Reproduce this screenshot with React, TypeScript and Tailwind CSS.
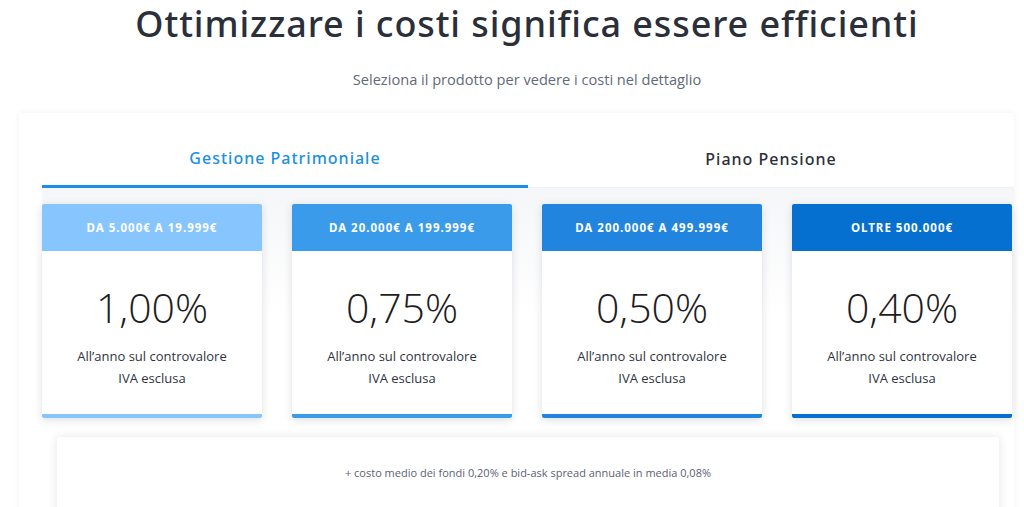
import React from "react";

const cards = [
  { range: "DA 5.000€ A 19.999€", pct: "1,00%", head: "bg-[#86c5fd]", bar: "bg-[#86c5fd]" },
  { range: "DA 20.000€ A 199.999€", pct: "0,75%", head: "bg-[#3a9bea]", bar: "bg-[#3a9bea]" },
  { range: "DA 200.000€ A 499.999€", pct: "0,50%", head: "bg-[#2184de]", bar: "bg-[#2184de]" },
  { range: "OLTRE 500.000€", pct: "0,40%", head: "bg-[#0570d0]", bar: "bg-[#0570d0]" },
];

export default function App() {
  return (
    <div className="w-[1024px] h-[507px] overflow-hidden bg-white font-['Open_Sans',sans-serif]">
      <div className="pl-[30px]">
        <h1 className="pt-[2px] text-center text-[36px] leading-[44px] font-medium text-[#2b2f3a] tracking-[0.9px] font-['Noto_Sans',sans-serif]">
          Ottimizzare i costi significa essere efficienti
        </h1>
        <p className="mt-[22px] text-center text-[14.6px] leading-[22px] text-[#626a7a]">
          Seleziona il prodotto per vedere i costi nel dettaglio
        </p>
      </div>
      <div className="ml-[19px] mt-[23px] w-[995px] h-[420px] bg-white shadow-[0_0_6px_rgba(0,0,0,0.06)] pl-[23px]">
        <div className="flex h-[75px]">
          <div className="w-[486px] flex flex-col">
            <div className="flex-1 flex items-center justify-center pt-[18px] text-[16px] tracking-[1px] font-medium text-[#1b90e2] font-['Noto_Sans',sans-serif]">
              Gestione Patrimoniale
            </div>
            <div className="h-[3px] bg-[#1b90e2]" />
          </div>
          <div className="flex-1 flex flex-col">
            <div className="flex-1 flex items-center justify-center pt-[18px] text-[16px] tracking-[1px] font-medium text-[#2b2f3a] font-['Noto_Sans',sans-serif]">
              Piano Pensione
            </div>
            <div className="h-[1px] bg-[#eef0f3]" />
          </div>
        </div>
        <div className="bg-gradient-to-b from-[#f5f6f8] via-white to-white pt-[16px] pr-[1px]">
          <div className="flex gap-[30px]">
            {cards.map((c) => (
              <div key={c.range} className="w-[220px] h-[214px] bg-white rounded-[2px] shadow-[0_2px_8px_rgba(30,40,70,0.15)] flex flex-col overflow-hidden">
                <div className={`${c.head} h-[47px] flex items-center justify-center text-white text-[11.5px] font-bold tracking-[1px] font-['Noto_Sans',sans-serif]`}>
                  {c.range}
                </div>
                <div className="flex-1 flex flex-col items-center">
                  <div className="mt-[31px] text-[41px] leading-[50px] font-light text-[#1d1d22]">{c.pct}</div>
                  <div className="mt-[13px] text-[13px] leading-[22px] text-[#2f3340] text-center">
                    All’anno sul controvalore
                    <br />
                    IVA esclusa
                  </div>
                </div>
                <div className={`${c.bar} h-[4px]`} />
              </div>
            ))}
          </div>
          <div className="h-[19px]" />
        </div>
        <div className="ml-[15px] w-[942px] h-[80px] bg-white rounded-[3px] shadow-[0_0_10px_rgba(30,40,70,0.12)] flex justify-center pt-[28px] text-[11px] leading-[16px] text-[#5b6272]">
          + costo medio dei fondi 0,20% e bid-ask spread annuale in media 0,08%
        </div>
      </div>
    </div>
  );
}
